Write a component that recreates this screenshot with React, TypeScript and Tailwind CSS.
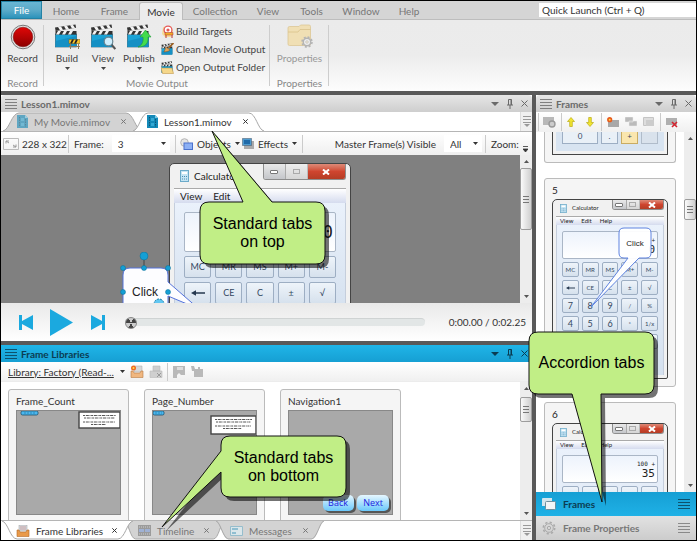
import React from "react";

/* ---------- shared pieces ---------- */

function Clapper({ children, className = "h-6 w-6" }: { children?: React.ReactNode; className?: string }) {
  return (
    <svg viewBox="0 0 26 26" className={className} aria-hidden="true">
      <rect x="1.5" y="10" width="21" height="13" fill="#1ba3d6" stroke="#17506b" strokeWidth="0.6" />
      <path d="M1.5 23V17L22.5 12v11z" fill="#1590c4" />
      <path d="M1.5 7h21v3.6h-21z" fill="#333" />
      <path d="M4 7h3l-2 3.6H2zM10 7h3l-2 3.6H8zM16 7h3l-2 3.6h-3z" fill="#f4f4f4" />
      <path d="M1 3.5 21.5 0.5l0.6 3.3L1.6 7z" fill="#333" />
      <path d="m4 3.1 3-.5 2 3.2-3 .5zM10 2.2l3-.4 2 3.1-3 .5zM16 1.3l3-.4 2 3-3 .5z" fill="#f4f4f4" />
      {children}
    </svg>
  );
}

function Caret({ className = "" }: { className?: string }) {
  return (
    <svg viewBox="0 0 5 3" className={"h-[3px] w-[5px] shrink-0 " + className} aria-hidden="true">
      <path d="M0 0h5L2.5 3z" fill="currentColor" />
    </svg>
  );
}

function Grip({ className = "" }: { className?: string }) {
  return (
    <svg viewBox="0 0 12 12" className={"h-3 w-3 shrink-0 opacity-80 " + className} aria-hidden="true">
      <path d="M0 1.5h12M0 4.5h12M0 7.5h12M0 10.5h12" stroke="currentColor" />
    </svg>
  );
}

function PanelHeader({ title, active = false }: { title: string; active?: boolean }) {
  const tone = active
    ? "bg-linear-to-b from-[#1fb5e8] to-[#169fd3] text-[#0b3c52]"
    : "rounded-t-sm bg-linear-to-b from-[#e6e6e6] to-[#cecece] text-[#6a6a6a]";
  return (
    <div className={"flex h-[17px] shrink-0 items-center pl-1 pr-1 " + tone}>
      <Grip />
      <h2 className="ml-1 flex-1 text-[10px] leading-4 font-bold">{title}</h2>
      <div className="flex items-center gap-2">
        <button aria-label="Window menu" className="flex h-3 w-2 items-center">
          <svg viewBox="0 0 8 4" className="h-1 w-2"><path d="M0 0h8L4 4z" fill="currentColor" /></svg>
        </button>
        <button aria-label="Pin" className="h-[10px] w-[6px]">
          <svg viewBox="0 0 6 10" className="h-[10px] w-[6px]"><path d="M1.5 6V.5h3V6M4 .5V6M0 6h6M3 6v4" fill="none" stroke="currentColor" /></svg>
        </button>
        <button aria-label="Close" className="h-[7px] w-[7px]">
          <svg viewBox="0 0 7 7" className="h-[7px] w-[7px]"><path d="m.5.5 6 6m0-6-6 6" stroke="currentColor" /></svg>
        </button>
      </div>
    </div>
  );
}

function ScrollBar({ lead, thumb }: { lead: string; thumb: string }) {
  return (
    <div className="flex w-3 shrink-0 flex-col items-center bg-[#ededed] text-[#555]">
      <svg viewBox="0 0 5 3" className="my-[5px] h-[3px] w-[5px] shrink-0"><path d="M0 3h5L2.5 0z" fill="currentColor" /></svg>
      <div className={lead} />
      <div className={"flex w-full shrink-0 items-center justify-center rounded-[2px] border border-[#9c9c9c] bg-linear-to-r from-[#fafafa] to-[#cfcfcf] " + thumb}>
        <svg viewBox="0 0 6 7" className="h-[7px] w-[6px]"><path d="M0 .5h6M0 3.5h6M0 6.5h6" stroke="#777" /></svg>
      </div>
      <div className="flex-1" />
      <Caret className="my-[5px]" />
    </div>
  );
}

function TabShape({ active, flip = false }: { active: boolean; flip?: boolean }) {
  return (
    <svg viewBox="0 0 130 19" preserveAspectRatio="none" className={"absolute inset-0 h-full w-full " + (flip ? "-scale-y-100" : "")} aria-hidden="true">
      <path
        d="M0 19C6 18 8 1 15 1H115C122 1 124 18 130 19"
        fill={active ? "#ffffff" : "#d3d3d3"}
        stroke="#a8a8a8"
        vectorEffect="non-scaling-stroke"
      />
    </svg>
  );
}

function DocTab({ label, icon, active = false, flip = false, width }: {
  label: string; icon: React.ReactNode; active?: boolean; flip?: boolean; width: string;
}) {
  return (
    <div className={"relative -mr-[9px] h-[19px] shrink-0 " + width + (active ? " z-10" : "")}>
      <TabShape active={active} flip={flip} />
      <div className={"relative flex h-full items-center pr-4 pl-[14px] " + (active ? "text-[#333]" : "text-[#777]")}>
        <button role="tab" aria-selected={active} className="flex flex-1 items-center gap-[6px] text-left whitespace-nowrap">
          <span className={active ? "" : "opacity-60"}>{icon}</span>
          {label}
        </button>
        <button aria-label={"Close " + label} className="h-[5px] w-[5px]">
          <svg viewBox="0 0 5 5" className="block h-[5px] w-[5px]"><path d="m.3.3 4.4 4.4m0-4.4L.3 4.7" stroke="currentColor" /></svg>
        </button>
      </div>
    </div>
  );
}

function TabOverflow() {
  return (
    <button aria-label="More tabs" className="flex w-3 shrink-0 items-center justify-center border-l border-[#ddd] bg-[#f0f0f0]">
      <svg viewBox="0 0 8 11" className="h-[11px] w-2"><path d="M0 .5h8M0 3.5h8M0 6.5h8" stroke="#999" /><path d="M1 8h6l-3 3z" fill="#999" /></svg>
    </button>
  );
}

function Sep() {
  return <div className="h-[18px] w-px shrink-0 bg-[#cbcbcb]" />;
}

/* ---------- ribbon ---------- */

const ribbonTabs = [
  { name: "Home", width: "w-[48px]" },
  { name: "Frame", width: "w-[49px]" },
  { name: "Movie", width: "w-[44px]" },
  { name: "Collection", width: "w-[64px]" },
  { name: "View", width: "w-[42px]" },
  { name: "Tools", width: "w-[45px]" },
  { name: "Window", width: "w-[54px]" },
  { name: "Help", width: "w-[42px]" },
];

function RibbonBig({ label, children, menu = false }: { label: string; children: React.ReactNode; menu?: boolean }) {
  return (
    <button className="flex w-9 flex-col items-center pt-[2px]">
      {children}
      <span className="leading-4">{label}</span>
      {menu && <Caret className="mt-[1px]" />}
    </button>
  );
}

function RibbonSmall({ label, children }: { label: string; children: React.ReactNode }) {
  return (
    <button className="flex h-[18px] items-center gap-[2px] whitespace-nowrap">
      {children}
      {label}
    </button>
  );
}

function RibbonGroup({ title, width, children }: { title: string; width: string; children: React.ReactNode }) {
  return (
    <section className={"relative flex shrink-0 flex-col " + width}>
      <div className="flex flex-1 items-start justify-center pt-[2px]">{children}</div>
      <h3 className="text-center leading-[15px] text-[#888]">{title}</h3>
      <div className="absolute top-[5px] right-0 bottom-[5px] w-px bg-[#cdcdcd]" />
    </section>
  );
}

function Ribbon() {
  return (
    <header className="shrink-0">
      <div className="flex h-[19px] items-end border-b border-[#bdbdbd] bg-[#d5d5d5] text-[#777]">
        <button className="h-[18px] w-[41px] border border-[#2382a5] bg-linear-to-b from-[#69b6d4] via-[#5cabc9] to-[#2a93bb] leading-4 text-white">File</button>
        <nav className="flex">
          {ribbonTabs.map((t) => (
            <button
              key={t.name}
              className={
                t.width +
                (t.name === "Movie"
                  ? " -mb-px h-[18px] rounded-t-[3px] border border-b-0 border-[#bcbcbc] bg-[#ececec] leading-[18px] text-[#333]"
                  : " h-[17px] leading-4")
              }
            >
              {t.name}
            </button>
          ))}
        </nav>
        <input
          aria-label="Quick Launch"
          defaultValue="Quick Launch (Ctrl + Q)"
          className="mb-[2px] ml-auto h-[14px] w-[157px] bg-white pl-[3px] text-[10px] text-[#333] outline-none"
        />
      </div>
      <div className="flex h-[71px] bg-linear-to-b from-[#ebebeb] from-0% via-[#ececec] via-50% to-[#fdfdfd] text-[#444]">
        <RibbonGroup title="Record" width="w-[43px]">
          <RibbonBig label="Record">
            <svg viewBox="0 0 26 26" className="h-[26px] w-[26px]">
              <defs><linearGradient id="rec" x2="0" y2="1"><stop stopColor="#e00808" /><stop offset="1" stopColor="#8c0000" /></linearGradient></defs>
              <circle cx="13" cy="13" r="11.8" fill="#e2e2e2" stroke="#777" />
              <circle cx="13" cy="13" r="9.8" fill="url(#rec)" stroke="#7a1010" strokeWidth="0.6" />
            </svg>
          </RibbonBig>
        </RibbonGroup>
        <RibbonGroup title="Movie Output" width="w-[226px]">
          <div className="flex w-full pl-[5px]">
            <RibbonBig label="Build" menu>
              <Clapper className="h-[26px] w-[26px]">
                <path d="M15 15.5h11v4H15z" fill="#f7c52b" stroke="#7b5a10" strokeWidth="0.5" />
                <path d="m16 19.5 2-4h2l-2 4zm4 0 2-4h2l-2 4z" fill="#222" />
                <path d="M16.5 19.5V25M24.500 19.500V25M15 22.500h11" stroke="#8d7a5b" />
              </Clapper>
            </RibbonBig>
            <RibbonBig label="View" menu>
              <Clapper className="h-[26px] w-[26px]">
                <circle cx="18.500" cy="17.500" r="4.300" fill="#cfeefd" stroke="#6d8793" strokeWidth="1.200" />
                <path d="m21.800 21 3.500 4" stroke="#555" strokeWidth="2" />
              </Clapper>
            </RibbonBig>
            <RibbonBig label="Publish" menu>
              <Clapper className="h-[26px] w-[26px]">
                <path d="M12 23c4.500-2 5.500-6 5-10h-3l5.500-7 5.500 7h-3c.5 6-2 10-10 10z" fill="#43dc4c" stroke="#1f9a35" strokeWidth="0.600" />
              </Clapper>
            </RibbonBig>
            <div className="ml-[4px] flex flex-col">
              <RibbonSmall label="Build Targets">
                <svg viewBox="0 0 13 13" className="h-[13px] w-[13px]">
                  <path d="M1 9 2 2l8-1 2 5-2 6H4z" fill="#f6dc9a" />
                  <circle cx="7" cy="5" r="3.900" fill="#fff" stroke="#e4585a" strokeWidth="1.300" /><circle cx="7" cy="5" r="1.600" fill="#e4585a" />
                  <path d="M4 7.500h8v2.500H4z" fill="#f2ae25" stroke="#a33" strokeWidth="0.500" /><path d="M5 10v3M11 10v3" stroke="#b33" />
                </svg>
              </RibbonSmall>
              <RibbonSmall label="Clean Movie Output">
                <Clapper className="h-[13px] w-[13px]">
                  <path d="M25 0 15 10" stroke="#9b5e1f" strokeWidth="3.500" /><path d="m10 8 8 6c-4 4-9 3-12 4z" fill="#e0a45c" stroke="#8c5319" />
                </Clapper>
              </RibbonSmall>
              <RibbonSmall label="Open Output Folder">
                <Clapper className="h-[13px] w-[13px]">
                  <path d="M0 14h22l3 11H3z" fill="#f5d78a" stroke="#b98b35" />
                </Clapper>
              </RibbonSmall>
            </div>
          </div>
        </RibbonGroup>
        <RibbonGroup title="Properties" width="w-[59px]">
          <button disabled className="flex flex-col items-center pt-[2px] text-[#999]">
            <svg viewBox="0 0 26 26" className="h-[26px] w-[26px]">
              <path d="M1 4q0-1.500 1.500-1.500H12L13.500 1H22q1.500 0 1.500 1.500V20q0 1.500-1.500 1.500H2.500Q1 21.500 1 20z" fill="#f0dfb4" stroke="#dcc795" strokeWidth="0.800" />
              <path d="M1 8h10l2-2.500h10.500" fill="none" stroke="#d9c18c" strokeWidth="0.800" />
              <circle cx="20" cy="18" r="3.700" fill="#eee" stroke="#b4b4b4" strokeWidth="1.500" /><circle cx="20" cy="18" r="5" fill="none" stroke="#b4b4b4" strokeWidth="1.500" strokeDasharray="2 1.930" /><circle cx="20" cy="18" r="1.300" fill="#f5edd6" stroke="#b4b4b4" strokeWidth="0.600" />
            </svg>
            <span className="leading-4">Properties</span>
          </button>
        </RibbonGroup>
      </div>
    </header>
  );
}

/* ---------- calculator artwork ---------- */

const calcKeys = ["MC", "MR", "MS", "M+", "M-", "←", "CE", "C", "±", "√", "7", "8", "9", "/", "%", "4", "5", "6", "*", "1/x", "1", "2", "3", "-", "="];

function Calculator({ small = false, blank = false, rows, history = "", value, className = "" }: {
  small?: boolean; blank?: boolean; rows: number; history?: string; value: string; className?: string;
}) {
  const k = small
    ? { pad: "px-[3px]", title: "h-4 text-[6px] pl-1", icon: "h-[9px] w-[7px]", win: "h-[10px] w-[52px]", menu: "h-[9px] gap-2 pl-1 text-[6px] leading-[8px]", body: "px-[5px] pt-[6px]", disp: "h-7 text-[11px]", hist: "text-[6px] leading-[8px]", grid: "mt-[3px] gap-x-[3px] gap-y-[3px]", key: "h-[15px] text-[6px] leading-[13px]" }
    : { pad: "px-1", title: "h-6 text-[10px] pl-[6px]", icon: "h-3 w-[9px]", win: "h-4 w-[83px]", menu: "h-[15px] gap-[11px] pl-[6px] text-[10px] leading-[14px]", body: "px-[9px] pt-[9px]", disp: "h-10 text-[17px]", hist: "text-[9px] leading-3", grid: "mt-1 gap-x-1 gap-y-1", key: "h-[22px] text-[9px] leading-5" };
  return (
    <div className={"flex flex-col overflow-hidden rounded-t-[5px] border border-[#444] bg-[#f1f1f1] text-[#222] " + k.pad + " " + className}>
      <div className={"flex shrink-0 items-center gap-[5px] " + k.title}>
        <svg viewBox="0 0 9 12" className={k.icon}><rect x=".5" y=".5" width="8" height="11" fill="#c4e4f3" stroke="#6caac9" /><path d="M2 3h5" stroke="#fff" strokeWidth="2" /><path d="M2 6.500h5M2 9h5" stroke="#4c8eb4" strokeDasharray="1 1" /></svg>
        <span className="flex-1">Calculator</span>
        <span className={"flex self-start overflow-hidden rounded-b-[3px] border border-t-0 border-[#8d8d8d] " + k.win}>
          <span className="flex flex-1 items-center justify-center border-r border-[#aaa] bg-linear-to-b from-[#e9e9e9] to-[#c4c6ca]"><i className="h-1 w-2 rounded-[1px] border border-[#777] bg-white" /></span>
          <span className="flex flex-1 items-center justify-center border-r border-[#bbb] bg-linear-to-b from-[#ededed] to-[#d5d5d5]"><i className="h-[5px] w-[7px] border border-[#aaa]" /></span>
          <span className="flex flex-[1.8] items-center justify-center bg-linear-to-b from-[#dd8a78] via-[#cf452f] to-[#b53d25]">
            <svg viewBox="0 0 8 6" className="h-[6px] w-2"><path d="m1 .5 6 5m0-5-6 5" stroke="#fff" strokeWidth="2" /></svg>
          </span>
        </span>
      </div>
      <div className={"flex shrink-0 border-t border-[#aaa] bg-linear-to-b from-white to-[#d5dbee] " + k.menu}>
        <span>View</span><span>Edit</span><span>Help</span>
      </div>
      <div className={"flex-1 border-x border-[#c5cedc] bg-linear-to-b from-[#eaf1fb] to-[#d5e1ef] " + k.body}>
        <div className={"flex flex-col items-end justify-center rounded-[2px] border border-[#aab6c6] bg-linear-to-b from-[#edf3fc] to-white px-[2px] " + k.disp}>
          <span className={"font-['DejaVu_Sans_Mono',monospace] " + k.hist}>{history}</span>
          <span className="leading-none font-['DejaVu_Sans_Mono',monospace]">{value}</span>
        </div>
        <div className={"grid grid-cols-5 " + k.grid}>
          {calcKeys.slice(0, rows * 5).map((c) => (
            <div key={c} className={"flex items-center justify-center rounded-[2px] border border-[#9daec3] bg-linear-to-b from-[#eef4fa] to-[#d6e1ed] text-[#33475f] " + k.key + (small && /^\d$/.test(c) ? " text-[9px]" : "")}>
              {blank ? null : c === "←" ? (
                <svg viewBox="0 0 14 6" className={small ? "h-1 w-[9px]" : "h-[6px] w-[14px]"}><path d="M3 3h11" stroke="#26384f" strokeWidth="1.500" /><path d="M0 3 5 .3v5.400z" fill="#26384f" /></svg>
              ) : c}
            </div>
          ))}
        </div>
      </div>
    </div>
  );
}

/* ---------- movie panel ---------- */

function FilmIcon() {
  return (
    <svg viewBox="0 0 11 13" className="block h-[13px] w-[11px]">
      <path d="M0 0h8l3 3v10H0z" fill="#1389b8" />
      <path d="M8 0v3h3z" fill="#7cc9e6" />
      <path d="M2.500 2v10M8.500 4v8" stroke="#0b5576" strokeDasharray="1.500 1" />
      <path d="M4 3h3v3H4zM4 8h3v3H4z" fill="#35a9d4" />
    </svg>
  );
}

function ToolbarSelect({ label, value, width }: { label: string; value: string; width: string }) {
  return (
    <label className="flex items-center gap-2 whitespace-nowrap">
      {label}
      <span className={"relative flex items-center " + width}>
        <select aria-label={label} className="h-[17px] w-full appearance-none bg-white pl-[6px] outline-none">
          <option>{value}</option>
        </select>
        <Caret className="pointer-events-none absolute right-1" />
      </span>
    </label>
  );
}

const handles = [
  { x: 24, y: 4, r: 4 }, { x: 24, y: 16, r: 2.5 }, { x: 3, y: 16, r: 2.5 }, { x: 48, y: 16, r: 2.5 }, { x: 3, y: 40, r: 2.5 }, { x: 48, y: 40, r: 2.5 },
];

function MoviePanel() {
  return (
    <section className="flex h-[246px] shrink-0 flex-col bg-white">
      <PanelHeader title="Lesson1.mimov" />
      <div className="flex shrink-0 border-b border-[#b5b5b5]">
        <div role="tablist" className="flex flex-1 overflow-hidden pl-[2px]">
          <DocTab label="My Movie.mimov" icon={<FilmIcon />} width="w-[139px]" />
          <DocTab label="Lesson1.mimov" icon={<FilmIcon />} active width="w-[131px]" />
        </div>
        <TabOverflow />
      </div>
      <div className="flex h-[23px] shrink-0 items-center overflow-hidden bg-linear-to-b from-white to-[#efefef] pl-[2px]">
        <svg viewBox="0 0 16 12" className="mr-[3px] h-3 w-4 shrink-0"><path d="M.5.500h15v11H.5z" fill="none" stroke="#bbb" /><path d="m3 3 3 2M3 5.500V3h3M13 9l-3-2m3-.5V9h-3" fill="none" stroke="#999" /></svg>
        <span className="w-[46px] whitespace-nowrap">228 x 322</span>
        <Sep />
        <div className="w-[106px] pl-[5px]"><ToolbarSelect label="Frame:" value="3" width="w-[58px]" /></div>
        <Sep />
        <button className="ml-1 flex w-[62px] items-center gap-1">
          <svg viewBox="0 0 13 12" className="h-3 w-[13px]"><circle cx="4.500" cy="4.500" r="3.800" fill="#e4e4e4" stroke="#b5b5b5" /><rect x="4" y="5" width="8.500" height="6.500" fill="#8cb0f5" stroke="#4a71cc" /></svg>
          Objects <Caret />
        </button>
        <button className="flex w-[60px] items-center gap-1">
          <svg viewBox="0 0 12 11" className="h-[11px] w-3"><path d="M2 3h10v8H2z" fill="#aaa" /><path d="M.5.500h9v7h-9z" fill="#4d9bd0" stroke="#456" strokeDasharray="1 1" /><path d="M2 2h6v4H2z" fill="#1f6aa8" /></svg>
          Effects <Caret />
        </button>
        <Sep />
        <div className="ml-auto pr-[3px]"><ToolbarSelect label="Master Frame(s) Visible" value="All" width="w-[38px]" /></div>
        <Sep />
        <span className="w-[37px] shrink-0 pl-[5px]">Zoom:</span>
        <button aria-label="Toolbar options" className="w-[9px] self-end pb-[3px]"><svg viewBox="0 0 5 6" className="h-[6px] w-[5px]"><path d="M0 .5h5M0 3h5L2.500 6z" stroke="#333" fill="#333" strokeWidth="0.800" /></svg></button>
      </div>
      <div className="flex min-h-0 flex-1">
        <div className="relative flex-1 overflow-hidden bg-[#808080]">
          <Calculator rows={2} value="0" className="absolute top-2 left-[168px] h-[150px] w-[182px]" />
          <svg viewBox="0 0 90 56" className="absolute top-[97px] left-[119px] h-14 w-[90px]">
            <path d="M3 60V23q0-7 7-7h31q7 0 7 7v7L79 57 48 44v16z" fill="#fdfdff" stroke="#5573dc" />
            <path d="M24 4v12" stroke="#444" />
            {handles.map((h, i) => <circle key={i} cx={h.x} cy={h.y} r={h.r} fill="#149fd5" stroke="#0d6c94" strokeWidth="0.500" />)}
            <circle cx="39" cy="52" r="5" fill="#62c7f2" stroke="#1a7ba5" strokeDasharray="2 1" />
          </svg>
          <span className="absolute top-[129px] left-[131px] font-['Liberation_Sans',Arial,sans-serif] text-[12px] leading-4 text-[#222]">Click</span>
        </div>
        <ScrollBar lead="h-0" thumb="h-[62px]" />
      </div>
      <div className="flex h-[38px] shrink-0 items-center bg-linear-to-b from-[#e9e9e9] to-white pr-[6px] pl-[18px]">
        <button aria-label="Previous frame"><svg viewBox="0 0 14 15" className="h-[15px] w-[14px]"><path d="M0 0h3v6l11-6v15L3 9v6H0z" fill="#1ba9df" /></svg></button>
        <button aria-label="Play" className="ml-[17px]"><svg viewBox="0 0 23 27" className="h-[27px] w-[23px]"><path d="M0 0 23 13.500 0 27z" fill="#1ba9df" /></svg></button>
        <button aria-label="Next frame" className="ml-[18px]"><svg viewBox="0 0 14 15" className="h-[15px] w-[14px]"><path d="M14 0h-3v6L0 0v15l11-6v6h3z" fill="#1ba9df" /></svg></button>
        <input
          type="range"
          aria-label="Position"
          defaultValue={0}
          className="ml-[20px] h-2 min-w-0 flex-1 appearance-none rounded-full border-t border-[#cfd3d3] bg-[#e2e6e6] [&::-webkit-slider-thumb]:h-3 [&::-webkit-slider-thumb]:w-3 [&::-webkit-slider-thumb]:appearance-none [&::-webkit-slider-thumb]:rounded-full [&::-webkit-slider-thumb]:border [&::-webkit-slider-thumb]:border-[#888] [&::-webkit-slider-thumb]:bg-[conic-gradient(#ccc_0_30deg,#444_30deg_90deg,#ccc_90deg_150deg,#444_150deg_210deg,#ccc_210deg_270deg,#444_270deg_330deg,#ccc_330deg)]"
        />
        <span className="w-[101px] text-right whitespace-nowrap">0:00.00 / 0:02.25</span>
      </div>
    </section>
  );
}

/* ---------- frame libraries ---------- */

function TrayIcon() {
  return (
    <svg viewBox="0 0 14 12" className="block h-3 w-[14px]"><path d="M3 0h8v6H3z" fill="#d9dde2" stroke="#999" strokeWidth="0.500" /><path d="M1 5h2l1 2h6l1-2h2v6.500H1z" fill="#e99a4a" stroke="#b36a26" strokeWidth="0.600" /><path d="M4 2h6M4 4h6" stroke="#b77" strokeWidth="0.600" /></svg>
  );
}

function LibraryCard({ title, children }: { title: string; children: React.ReactNode }) {
  return (
    <article className="h-[145px] w-[121px] shrink-0 rounded-[3px] border border-[#bbb] bg-[#f5f5f5] px-[7px]">
      <h4 className="h-5 pt-[3px] leading-4">{title}</h4>
      <svg viewBox="0 0 105 105" className="h-[105px] w-[105px] bg-[#a9a9a9] outline outline-[#888] -outline-offset-1">{children}</svg>
    </article>
  );
}

function NoteArt({ x, y, w, h }: { x: number; y: number; w: number; h: number }) {
  return (
    <g>
      <rect x={x} y={y} width={w} height={h} fill="#fff" stroke="#444" strokeWidth="1.400" />
      <g stroke="#444" strokeWidth="0.900" strokeDasharray="2 0.800 3 0.700 1 0.600">
        <path d={`M${x + 4} ${y + 3.5}H${x + w - 4}M${x + 5} ${y + 6}H${x + w - 5}M${x + 4} ${y + 10}H${x + w - 5}M${x + 12} ${y + 12.5}H${x + w - 14}`} />
      </g>
    </g>
  );
}

function LibraryPanel() {
  return (
    <section className="mt-1 flex min-h-0 flex-1 flex-col bg-white">
      <PanelHeader title="Frame Libraries" active />
      <div className="flex h-5 shrink-0 items-center border-b border-[#ececec] bg-linear-to-b from-white to-[#f0f0f0] pl-[7px]">
        <button className="flex w-[117px] items-center justify-between whitespace-nowrap"><span className="underline">Library: Factory (Read-...</span><Caret /></button>
        <button aria-label="New library" className="ml-[5px]">
          <svg viewBox="0 0 14 13" className="h-[13px] w-[14px]"><path d="M4 1h8v6H4z" fill="#d8d8d8" stroke="#aaa" strokeWidth="0.500" /><path d="M1 6h2l1 2h6l1-2h2v6.500H1z" fill="#f0b780" stroke="#b87a42" strokeWidth="0.600" /><circle cx="3.500" cy="3" r="2.500" fill="#ee6b21" /><circle cx="3.500" cy="3" r="1" fill="#ffe050" /></svg>
        </button>
        <button aria-label="Remove library" className="ml-[5px]">
          <svg viewBox="0 0 14 13" className="h-[13px] w-[14px]"><path d="M4 1h7v5H4zM1 6h12v6.500H1z" fill="#cfcfcf" stroke="#b8b8b8" strokeWidth="0.600" /><path d="m8 8 4 4m0-4-4 4" stroke="#999" /></svg>
        </button>
        <div className="mr-[5px] ml-[4px]"><Sep /></div>
        <button aria-label="Save"><svg viewBox="0 0 12 12" className="h-3 w-3"><path d="M0 0h12v9H8l-2-2-2 2v3H0z" fill="#b9b9b9" /><path d="M4 1h6v3H4z" fill="#ddd" /></svg></button>
        <button aria-label="Add folder" className="ml-[6px]"><svg viewBox="0 0 12 12" className="h-3 w-3"><path d="M0 0h3l1 3h3V1h2v2h3v8H3V5H1z" fill="#b9b9b9" /></svg></button>
      </div>
      <div className="flex min-h-0 flex-1">
        <div className="flex flex-1 gap-[15px] overflow-hidden pt-[7px] pl-[7px]">
          <LibraryCard title="Frame_Count">
            <rect x="5" y="1" width="17" height="4" rx="1.500" fill="#4ab7ef" stroke="#16506f" strokeWidth="0.800" /><path d="M8 3h11" stroke="#2a7aa5" strokeWidth="0.700" strokeDasharray="2 1" />
            <NoteArt x={63} y={2} w={41} h={16} />
          </LibraryCard>
          <LibraryCard title="Page_Number">
            <rect x="1" y="1" width="11" height="4" rx="1.500" fill="#4ab7ef" stroke="#16506f" strokeWidth="0.800" /><path d="M3 3h7" stroke="#2a7aa5" strokeWidth="0.700" strokeDasharray="2 1" />
            <NoteArt x={59} y={6} w={45} h={18} />
          </LibraryCard>
          <LibraryCard title="Navigation1">
            <defs><linearGradient id="nav" x2="0" y2="1"><stop stopColor="#e6f7ff" /><stop offset="1" stopColor="#6ac8fb" /></linearGradient></defs>
            <rect x="37" y="87" width="31" height="16" rx="5" fill="#555" /><rect x="71" y="87" width="32" height="16" rx="5" fill="#555" />
            <rect x="35" y="85" width="31" height="16" rx="5" fill="url(#nav)" /><rect x="69" y="85" width="32" height="16" rx="5" fill="url(#nav)" />
            <g fill="#1c1ce0" fontSize="9" textAnchor="middle" fontFamily="'Open Sans',sans-serif"><text x="50" y="96">Back</text><text x="85" y="96">Next</text></g>
          </LibraryCard>
        </div>
        <ScrollBar lead="h-[2px]" thumb="h-[25px]" />
      </div>
      <div className="flex shrink-0 border-t border-[#b5b5b5]">
        <div role="tablist" className="flex flex-1 overflow-hidden pl-px">
          <DocTab label="Frame Libraries" icon={<TrayIcon />} active flip width="w-[131px]" />
          <DocTab
            label="Timeline" flip width="w-[101px]"
            icon={<svg viewBox="0 0 13 11" className="block h-[11px] w-[13px]"><path d="M0 0h13v11H0z" fill="#777" /><path d="M1 2h11M1 9h11" stroke="#ccc" strokeDasharray="1 1" /><path d="M1 4h5v3H1zM7 4h5v3H7z" fill="#7d9bd6" /></svg>}
          />
          <DocTab
            label="Messages" flip width="w-[108px]"
            icon={<svg viewBox="0 0 13 10" className="block h-[10px] w-[13px]"><path d="M.5.500h12v9H.5z" fill="#dff3fa" stroke="#6eb0c8" /><path d="M2 3h6M2 7h4" stroke="#3a9cc4" strokeWidth="1.500" /></svg>}
          />
        </div>
        <TabOverflow />
      </div>
    </section>
  );
}

/* ---------- frames sidebar ---------- */

function FramesPanel() {
  return (
    <aside className="ml-1 flex w-[160px] shrink-0 flex-col bg-white">
      <PanelHeader title="Frames" />
      <div className="flex h-5 shrink-0 items-center bg-linear-to-b from-white to-[#f0f0f0] pl-[2px]">
        <Sep />
        <button aria-label="Frame settings" className="ml-[4px]"><svg viewBox="0 0 13 12" className="h-3 w-[13px]"><path d="M0 1h11v8H0z" fill="#b8b8b8" /><circle cx="9" cy="8" r="3" fill="#ccc" stroke="#999" strokeWidth="1.400" /></svg></button>
        <div className="mx-[5px]"><Sep /></div>
        <button aria-label="Move up"><svg viewBox="0 0 8 10" className="h-[10px] w-2"><path d="m4 .5 3.500 4H5.300v5H2.700v-5H.5z" fill="#f2e530" stroke="#b9ab14" strokeWidth="0.700" /></svg></button>
        <button aria-label="Move down" className="ml-[11px]"><svg viewBox="0 0 8 10" className="h-[10px] w-2"><path d="m4 9.500 3.500-4H5.300v-5H2.700v5H.5z" fill="#f2e530" stroke="#b9ab14" strokeWidth="0.700" /></svg></button>
        <div className="mr-[5px] ml-[7px]"><Sep /></div>
        <button aria-label="New frame"><svg viewBox="0 0 12 11" className="h-[11px] w-3"><path d="M1 3h11v7H1z" fill="#a8a8a8" /><circle cx="2.700" cy="2.700" r="2.600" fill="#e85a1c" /><circle cx="2.700" cy="2.700" r="1" fill="#ffd942" /></svg></button>
        <button aria-label="Duplicate" className="ml-[6px]"><svg viewBox="0 0 12 10" className="h-[10px] w-3"><path d="M0 0h8v5H0zM4 4h8v5H4z" fill="#bbb" stroke="#eee" strokeWidth="0.500" /></svg></button>
        <button aria-label="Copy" className="ml-[6px]"><svg viewBox="0 0 12 10" className="h-[10px] w-3"><path d="M.5.500h10v8H.5z" fill="#ddd" stroke="#c4c4c4" /><path d="M3 3h8v6H3z" fill="#ccc" /></svg></button>
        <div className="mx-[5px]"><Sep /></div>
        <button aria-label="Delete frame"><svg viewBox="0 0 12 11" className="h-[11px] w-3"><path d="M0 1h11v7H0z" fill="#b0b0b0" /><path d="m6 5 5 5m0-5-5 5" stroke="#d3232f" strokeWidth="1.600" /></svg></button>
      </div>
      <div className="flex min-h-0 flex-1">
        <div className="flex flex-1 flex-col gap-[15px] overflow-hidden px-2">
          <article className="h-[31px] shrink-0 rounded-b-[3px] border border-t-0 border-[#bbb] bg-[#f5f5f5] px-[7px]">
            <div className="h-[23px] border border-t-0 border-[#444] bg-[#f1f1f1] px-[3px] pb-[3px]">
              <div className="flex h-full gap-[3px] bg-[#d8e4f1] px-[6px] text-center text-[8px] leading-[9px] text-[#33475f]">
                <span className="h-3 w-9 border border-t-0 border-[#9daec3] bg-[#e9f0f7]">0</span>
                <span className="h-3 flex-1 border border-t-0 border-[#9daec3] bg-[#e9f0f7]">.</span>
                <span className="h-3 flex-1 border border-t-0 border-[#c9ac63] bg-[#fae6ae]">+</span>
                <span className="h-3 flex-1 border border-t-0 border-[#b0bcca] bg-[#d9e2ec]" />
              </div>
            </div>
          </article>
          <article className="relative h-[209px] shrink-0 rounded-[3px] border border-[#bbb] bg-[#f5f5f5] px-[7px]">
            <h4 className="h-5 pt-[3px] leading-4 text-[#222]">5</h4>
            <Calculator small rows={5} history="+" value="0" className="h-[180px] rounded-b-[2px] pb-[3px]" />
            <svg viewBox="0 0 64 84" className="absolute top-12 left-[43px] h-[84px] w-16">
              <path d="M36 1h22q5 0 5 5v20q0 5-5 5H51L3 80 40 31h-4q-5 0-5-5V6q0-5 5-5z" fill="#fff" fillOpacity=".95" stroke="#5f83e0" />
              <text x="47" y="19" fontSize="8" textAnchor="middle" fontFamily="'Liberation Sans',Arial,sans-serif" fill="#222">Click</text>
            </svg>
          </article>
          <article className="h-[209px] shrink-0 rounded-[3px] border border-[#bbb] bg-[#f5f5f5] px-[7px]">
            <h4 className="h-5 pt-[3px] leading-4 text-[#222]">6</h4>
            <Calculator small blank rows={5} history="100 +" value="35" className="h-[180px]" />
          </article>
        </div>
        <ScrollBar lead="h-[54px]" thumb="h-[21px]" />
      </div>
      <button className="flex h-6 shrink-0 items-center bg-linear-to-b from-[#159fd4] to-[#1fb1e6] px-[6px] font-bold text-[#0b3c52]">
        <svg viewBox="0 0 14 12" className="mr-[7px] h-3 w-[14px]"><path d="M0 1q0-1 1-1h9v8H0z" fill="#d3e6ee" /><rect x="3.500" y="3.500" width="10" height="8" rx="1" fill="#f4f6f7" stroke="#6f8f9d" /></svg>
        <span className="flex-1 text-left">Frames</span>
        <Grip />
      </button>
      <button className="flex h-6 shrink-0 items-center bg-linear-to-b from-[#e2e2e2] to-[#cccccc] px-[6px] font-bold text-[#777]">
        <svg viewBox="0 0 14 14" className="mr-[7px] h-[14px] w-[14px]" fill="none" stroke="#aaa"><circle cx="7" cy="7" r="5.700" strokeWidth="1.600" strokeDasharray="2.200 2.270" /><circle cx="7" cy="7" r="4.300" /><circle cx="7" cy="7" r="1.700" /></svg>
        <span className="flex-1 text-left">Frame Properties</span>
        <Grip />
      </button>
    </aside>
  );
}

/* ---------- callouts lying over the window ---------- */

function Callout({ lines, box, art, view, path, text }: { lines: string[]; box: string; art: string; view: string; path: string; text: string }) {
  return (
    <div className={"pointer-events-none absolute z-30 " + box}>
      <svg viewBox={view} className={"absolute inset-0 overflow-visible " + art}>
        <path d={path} fill="#000" fillOpacity=".55" transform="translate(4 4)" />
        <path d={path} fill="#c1ee86" stroke="#111" />
      </svg>
      <div className={"absolute flex flex-col items-center justify-center font-['Liberation_Sans',Arial,sans-serif] text-[16px] leading-[18px] whitespace-nowrap text-black " + text}>
        {lines.map((l) => <p key={l}>{l}</p>)}
      </div>
    </div>
  );
}

export default function App() {
  return (
    <div className="relative flex h-screen flex-col overflow-hidden border border-black bg-[#595959] font-['Lato','Open_Sans',sans-serif] text-[10px] leading-4 text-[#333]">
      <Ribbon />
      <main className="flex min-h-0 flex-1 pt-1">
        <div className="flex min-w-0 flex-1 flex-col">
          <MoviePanel />
          <LibraryPanel />
        </div>
        <FramesPanel />
      </main>
      <Callout
        lines={["Standard tabs", "on top"]} box="top-[130px] left-[199px]" art="h-[134px] w-[126px]" view="0 0 126 134"
        path="M9 71H43L12 0 72 71H116q9 0 9 9v44q0 9-9 9H9q-9 0-9-9V80q0-9 9-9z" text="top-[71px] left-0 h-[62px] w-[125px]"
      />
      <Callout
        lines={["Standard tabs", "on bottom"]} box="top-[435px] left-[161px]" art="h-[92px] w-[184px]" view="0 0 184 92"
        path="M68 0H175q9 0 9 9v43q0 9-9 9H68q-9 0-9-9V36L0 91 59 15V9q0-9 9-9z" text="top-0 left-[59px] h-[61px] w-[125px]"
      />
      <Callout
        lines={["Accordion tabs"]} box="top-[331px] right-[42px] w-[125px]" art="h-[171px] w-[125px]" view="0 0 125 171"
        path="M9 0H116q9 0 9 9v44q0 9-9 9H72L73 170 43 62H9q-9 0-9-9V9q0-9 9-9z" text="top-0 left-0 h-[62px] w-[125px]"
      />
    </div>
  );
}
